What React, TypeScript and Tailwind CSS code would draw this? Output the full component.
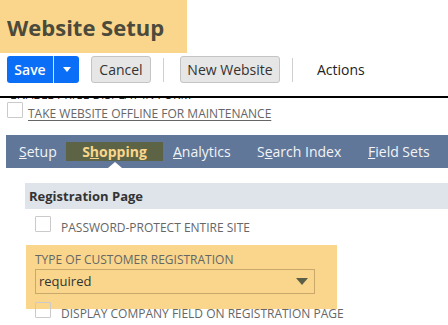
import React from "react";

// 체크박스 + 라벨 한 줄
function CheckRow({
  label,
  gap,
  underline,
  className = "",
}: {
  label: string;
  gap: string;
  underline?: boolean;
  className?: string;
}) {
  return (
    <div className={`flex items-start ${className}`}>
      <div className="w-[16px] h-[16px] border border-[#cacaca] rounded-[1px] shrink-0" />
      <span
        className={`${gap} mt-[4px] text-[12px] leading-[16px] text-[#666] uppercase whitespace-nowrap ${
          underline ? "underline underline-offset-2" : ""
        }`}
      >
        {label}
      </span>
    </div>
  );
}

export default function App() {
  return (
    <div className="w-[448px] h-[325px] overflow-hidden bg-white font-['Open_Sans',sans-serif]">
      {/* 페이지 제목 */}
      <div className="w-[187px] h-[53px] bg-[#f9d68b] flex items-center pl-[7px]">
        <h1 className="text-[22px] font-bold text-[#4b4a3b] leading-none">Website Setup</h1>
      </div>

      {/* 버튼 바 */}
      <div className="mt-[3px] h-[27px] pl-[7px] flex items-center text-[14px]">
        <div className="flex h-[27px] w-[72px] rounded-[3px] bg-[#0b6ef6] text-white">
          <div className="w-[46px] flex items-center justify-center font-semibold">Save</div>
          <div className="w-px bg-white/80" />
          <div className="flex-1 flex items-center justify-center">
            <div className="w-0 h-0 border-x-[4px] border-x-transparent border-t-[5px] border-t-white" />
          </div>
        </div>
        <div className="ml-[12px] h-[27px] w-[60px] flex items-center justify-center rounded-[3px] border border-[#c4c4c4] bg-[#e6e6e6] text-[#333]">
          Cancel
        </div>
        <div className="ml-[12px] h-[24px] w-px bg-[#d0d0d0]" />
        <div className="ml-[16px] h-[27px] w-[100px] flex items-center justify-center rounded-[3px] border border-[#c4c4c4] bg-[#e6e6e6] text-[#333]">
          New Website
        </div>
        <div className="ml-[12px] h-[24px] w-px bg-[#d0d0d0]" />
        <div className="ml-[24px] text-[#222]">Actions</div>
      </div>

      {/* 잘린 영역 구분선 */}
      <div className="mt-[13px] h-[2px] bg-black" />
      <div className="h-[3px] overflow-hidden pl-[10px]">
        <div className="-mt-[11px] text-[12px] leading-[16px] text-[#222] whitespace-nowrap">
          ENABLE PRICE DISPLAY IN FORM
        </div>
      </div>

      <CheckRow
        className="mt-[1px] h-[20px] pl-[7px]"
        gap="ml-[5px]"
        underline
        label="Take website offline for maintenance"
      />

      {/* 탭 바 */}
      <div className="mt-[13px] ml-[6px] h-[33px] bg-[#607799] pt-[7px] flex items-start text-[14px] leading-[19px] text-[#f2f4f8]">
        <div className="ml-[13px] w-[47px]">
          <span className="underline">S</span>etup
        </div>
        <div className="relative w-[97px] h-[19px] bg-[#5d6446] text-center font-bold text-[#f9d68b]">
          S<span className="underline">h</span>opping
          <div className="absolute left-[42px] top-[20px] w-0 h-0 border-x-[7px] border-x-transparent border-b-[6px] border-b-white" />
        </div>
        <div className="ml-[10px] w-[84px]">
          <span className="underline">A</span>nalytics
        </div>
        <div className="w-[111px]">
          S<span className="underline">e</span>arch Index
        </div>
        <div>
          <span className="underline">F</span>ield Sets
        </div>
      </div>

      {/* 섹션 헤더 */}
      <div className="mt-[15px] ml-[25px] h-[26px] bg-[#dfe3ea] pl-[4px] text-[13px] leading-[26px] font-bold text-[#333]">
        Registration Page
      </div>

      <CheckRow className="mt-[7px] pl-[35px]" gap="ml-[10px]" label="Password-protect entire site" />

      {/* 강조된 필드 */}
      <div className="mt-[9px] ml-[26px] w-[311px] h-[64px] bg-[#f9d68b] pl-[9px] pt-[7px]">
        <div className="text-[12px] leading-[16px] text-[#666] whitespace-nowrap">
          TYPE OF CUSTOMER REGISTRATION
        </div>
        <div className="mt-[1px] w-[280px] h-[25px] border border-[#c9a96b] flex items-center justify-between pl-[3px] pr-[6px]">
          <span className="text-[13px] text-[#333]">required</span>
          <div className="w-0 h-0 border-x-[6px] border-x-transparent border-t-[7px] border-t-[#5b5f47]" />
        </div>
      </div>

      <CheckRow
        className="-mt-[7px] pl-[35px]"
        gap="ml-[10px]"
        label="Display company field on registration page"
      />
    </div>
  );
}
